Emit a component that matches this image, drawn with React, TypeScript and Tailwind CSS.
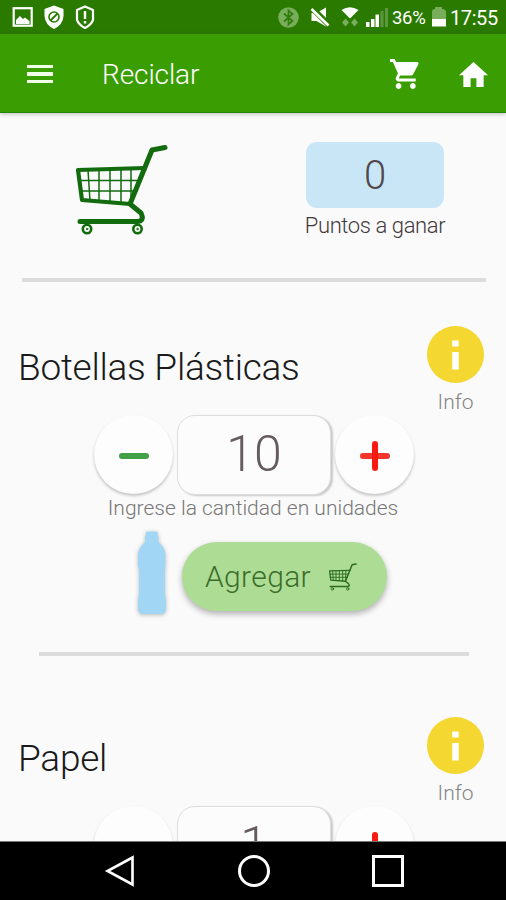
import type { ReactNode } from "react";

function CartDrawing({ className, color, grid = 1.5 }: { className: string; color: string; grid?: number }) {
  return (
    <svg viewBox="0 0 94 92" className={className} fill="none" stroke={color} strokeLinecap="round" strokeLinejoin="round">
      <path d="M90 3.500 L77 6 L55 60 L66 69 Q70 77 62 77.500 L5 77.500" strokeWidth="5" />
      <path d="M70 24 L3 26 L7 56 L55 60" strokeWidth="4.200" />
      <path d="M4 36.500 H66 M5 47 H62 M13 26 L15 57 M24 26 V57 M35 25 V58 M46 25 V59 M56 25 V58" strokeWidth={grid} />
      <circle cx="12" cy="85" r="4.200" strokeWidth="2.600" />
      <circle cx="62.500" cy="85" r="4.200" strokeWidth="2.600" />
      <circle cx="12" cy="85" r="0.800" strokeWidth="1" />
      <circle cx="62.500" cy="85" r="0.800" strokeWidth="1" />
    </svg>
  );
}

function StatusBar() {
  return (
    <div className="flex h-[34px] shrink-0 items-center bg-[#2a7a00] text-white">
      <svg viewBox="0 0 110 34" className="h-[34px] w-[110px] shrink-0">
        <rect x="13.700" y="8.200" width="18" height="17.500" fill="none" stroke="#fff" strokeWidth="2.200" />
        <path d="M16 24 V20 L20 16 L23 19 L25 17.500 L29.500 21 V24 Z" fill="#fff" />
        <path d="M54 5.500 L63.500 9 V16 Q63 24.500 54 29 Q45 24.500 44.500 16 V9 Z" fill="#fff" />
        <circle cx="54" cy="17" r="5" fill="none" stroke="#2a7a00" strokeWidth="1.600" />
        <path d="M50.500 20.500 L57.500 13.500" stroke="#2a7a00" strokeWidth="2" />
        <path d="M85 6.500 L93 10 V20 Q91 25 85 28 Q79 25 77 20 V10 Z" fill="none" stroke="#fff" strokeWidth="2.200" strokeLinejoin="round" />
        <path d="M85 11 V19 M85 21 V23.500" stroke="#fff" strokeWidth="2.400" />
      </svg>
      <svg viewBox="0 0 119 34" className="ml-[163px] h-[34px] w-[119px] shrink-0">
        <circle cx="15.500" cy="17.500" r="10.300" fill="#78ad5b" />
        <path d="M11 13.500 L19.500 21 L15.500 24.500 V10.500 L19.500 14 L11 21.500" fill="none" stroke="#2f7c0a" strokeWidth="1.700" />
        <path d="M38.500 13 H43.500 L53 7.500 V26.500 L43.500 21 H38.500 Z" fill="#fff" />
        <path d="M39 8 L56 25" stroke="#2a7a00" strokeWidth="6" />
        <path d="M38.500 9 L55.500 25.500" stroke="#fff" strokeWidth="2.600" />
        <path d="M68.500 10 Q77 4.500 85.500 10 L77 18.500 Z" fill="#fff" />
        <path d="M69 22.500 L72.500 18.500 L76 22.500 L72.500 26.500 Z M78 22.500 L81.500 18.500 L85 22.500 L81.500 26.500 Z" fill="#78ad5b" />
        <path d="M93 22 H96.500 V27 H93 Z M98 19 H101.500 V27 H98 Z M102.500 14.500 H106 V27 H102.500 Z" fill="#fff" />
        <path d="M107.500 11 H110.500 V27 H107.500 Z M112 8 H115 V27 H112 Z" fill="#5c9640" />
      </svg>
      <span className="mt-0.5 w-[40px] whitespace-nowrap text-[18.500px] leading-none tracking-[-0.300px]">36%</span>
      <svg viewBox="0 0 14 20" className="h-5 w-[14px] shrink-0">
        <path d="M3 2 V0 H10 V2 Q14 2 14 5 V12 H0 V5 Q0 2 3 2 Z" fill="#78ad5b" />
        <path d="M0 12 H14 V19.500 H0 Z" fill="#fff" />
      </svg>
      <span className="ml-1 mt-0.5 whitespace-nowrap text-[20px] leading-none tracking-[-0.400px]">17:55</span>
    </div>
  );
}

function AppBar() {
  return (
    <header className="z-10 flex h-[79px] shrink-0 items-center border-b border-[#1f8a09] bg-[#3a9e03] pl-[27px] pt-[2px] text-white shadow-[0_1px_4px_rgba(0,0,0,0.25)]">
      <div className="flex w-[26px] flex-col gap-1">
        <span className="h-[3.500px] bg-[#f0ffe8]" />
        <span className="h-[3.500px] bg-[#f0ffe8]" />
        <span className="h-[3.500px] bg-[#f0ffe8]" />
      </div>
      <h1 className="ml-[49px] mt-[2px] text-[28px] font-light leading-none tracking-[-0.100px]">Reciclar</h1>
      <svg viewBox="1 2 21 20" preserveAspectRatio="none" className="ml-auto h-[30px] w-[30px]" fill="#fff">
        <path d="M7 18c-1.100 0-1.990.9-1.990 2S5.900 22 7 22s2-.9 2-2-.9-2-2-2zM1 2v2h2l3.600 7.590-1.350 2.450c-.16.280-.25.610-.25.960 0 1.100.9 2 2 2h12v-2H7.420c-.14 0-.25-.11-.25-.25l.03-.12.900-1.630h7.450c.75 0 1.410-.41 1.750-1.030l3.580-6.490A1 1 0 0 0 20 4H5.210l-.94-2H1zm16 16c-1.100 0-1.990.9-1.990 2s.89 2 1.990 2 2-.9 2-2-.9-2-2-2z" />
      </svg>
      <svg viewBox="2 3 20 17" preserveAspectRatio="none" className="ml-[39px] mr-[18px] h-[25px] w-[29px]" fill="#fff">
        <path d="M10 20v-6h4v6h5v-8h3L12 3 2 12h3v8z" />
      </svg>
    </header>
  );
}

function Summary() {
  return (
    <div className="ml-[22px] mr-[20px] flex h-[169px] shrink-0 border-b-4 border-[#dcdcdc]">
      <CartDrawing color="#126b0d" className="ml-[53px] mt-[31px] h-[92px] w-[94px]" />
      <div className="ml-auto mr-[42px] mt-[29px] flex w-[138px] flex-col items-center">
        <div className="flex h-[66px] w-full items-center justify-center rounded-[11px] bg-[#c9e6f7] pt-[2px] text-[40px] font-light leading-none text-[#51484d]">
          0
        </div>
        <span className="mt-[7px] whitespace-nowrap text-[22px] font-light leading-none tracking-[-0.400px] text-[#43383b]">Puntos a ganar</span>
      </div>
    </div>
  );
}

function InfoButton() {
  return (
    <div className="flex w-[57px] flex-col items-center">
      <svg viewBox="0 0 57 57" className="h-[57px] w-[57px]">
        <circle cx="28.500" cy="28.500" r="28.500" fill="#f5d731" />
        <path d="M25.200 14.500 H31.700 V20.500 H25.200 Z M25.200 26 H31.700 V43.500 H25.200 Z" fill="#fff" />
      </svg>
      <span className="mt-[9px] text-[21px] font-light leading-none text-[#858585]">Info</span>
    </div>
  );
}

function RoundButton({ children }: { children: ReactNode }) {
  return (
    <button className="flex h-[79px] w-[79px] items-center justify-center rounded-full bg-[#fdfdfd] shadow-[0_2px_3px_rgba(0,0,0,0.22)]">
      {children}
    </button>
  );
}

function Material({ name, amount }: { name: string; amount: string }) {
  return (
    <section className="flex h-[391px] shrink-0 flex-col items-center">
      <div className="flex h-[89px] w-full justify-between pl-[18px] pr-[22px]">
        <h2 className="mt-[23px] text-[37px] font-light leading-none tracking-[-0.260px] text-[#1a1a1a]">{name}</h2>
        <InfoButton />
      </div>
      <div className="flex h-20 gap-1 pl-[2px]">
        <RoundButton>
          <span className="mt-[2px] h-[6px] w-[30px] rounded-full bg-[#43a047]" />
        </RoundButton>
        <div className="flex h-20 w-[154px] items-center justify-center rounded-[18px] border border-[#dddddd] bg-[#fcfcfc] pb-[2px] text-[50px] font-light leading-none text-[#665b5f] shadow-[2px_1px_2px_rgba(0,0,0,0.2)]">
          {amount}
        </div>
        <RoundButton>
          <svg viewBox="0 0 30 30" className="mt-[2px] h-[30px] w-[30px]" strokeLinecap="round" strokeWidth="6">
            <path d="M3 15 H27" stroke="#f4372c" />
            <path d="M15 3 V27" stroke="#fb1a12" />
          </svg>
        </RoundButton>
      </div>
      <p className="mt-[3px] whitespace-nowrap text-[21px] font-light leading-none text-[#777777]">Ingrese la cantidad en unidades</p>
      <div className="mt-[12px] flex h-[84px] w-[250px] items-start">
        <svg viewBox="0 0 30 84" className="ml-[9px] h-[84px] w-[30px] shrink-0 overflow-visible drop-shadow-[0_1px_2px_rgba(0,0,0,0.25)]">
          <path d="M9 0.500 H20.500 V4 L21.500 5.500 V11 Q28.500 17 28.500 24 V34 L28 38 V63 L29 68 V78 Q29 83 24 83 H6 Q1 83 1 78 V68 L2 63 V38 L1 34 V24 Q1 17 8 11 V5.500 L9 4 Z" fill="#a1d7f4" />
        </svg>
        <button className="ml-[15px] mt-[11px] flex h-[69px] w-[205px] shrink-0 items-center rounded-full bg-[#addd95] pl-[23px] text-[30px] font-light tracking-[0.350px] text-[#3d6d2b] shadow-[0_3px_6px_rgba(0,0,0,0.3)]">
          Agregar
          <CartDrawing color="#2d6b22" grid={3} className="ml-[17px] h-[28px] w-[30px]" />
        </button>
      </div>
      <hr className="ml-[2px] mt-[37px] h-1 w-[430px] border-0 bg-[#dcdcdc]" />
    </section>
  );
}

function NavBar() {
  return (
    <nav className="flex h-[59px] shrink-0 items-center justify-center gap-[102px] border-t border-[#777777] bg-black pl-[2px]">
      <svg viewBox="0 0 32 32" className="h-8 w-8" fill="none" stroke="#fff" strokeWidth="2.600">
        <path d="M28.500 2.500 V29.500 L3.500 16 Z" />
      </svg>
      <span className="h-8 w-8 rounded-full border-[3px] border-white" />
      <span className="h-8 w-8 border-[3px] border-white" />
    </nav>
  );
}

export default function App() {
  return (
    <div className="flex h-[900px] w-[506px] flex-col overflow-hidden bg-[#fafafa] font-['Roboto',sans-serif]">
      <StatusBar />
      <AppBar />
      <main className="flex min-h-0 flex-1 flex-col overflow-hidden">
        <Summary />
        <div className="mt-11 flex flex-col">
          <Material name="Botellas Plásticas" amount="10" />
          <Material name="Papel" amount="1" />
        </div>
      </main>
      <NavBar />
    </div>
  );
}
